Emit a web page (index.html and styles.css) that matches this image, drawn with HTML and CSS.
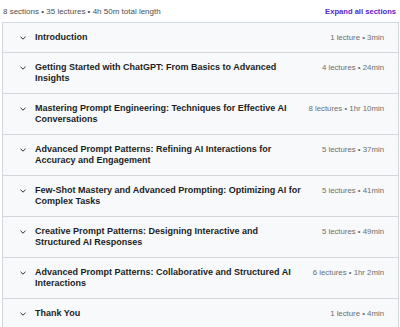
FILE: index.html
```html
<!DOCTYPE html>
<html lang="en">
<head>
  <meta charset="UTF-8" />
  <title>Course content</title>
  <link rel="stylesheet" href="styles.css">
</head>
<body>
  <div class="curriculum">
    <div class="summary">
      <span class="summary-text">8 sections • 35 lectures • 4h 50m total length</span>
      <button class="expand-all">Expand all sections</button>
    </div>

    <div class="sections">
      <div class="section">
        <svg class="chevron" viewBox="0 0 8 8"><path d="M1.5 2.8 L4 5.2 L6.5 2.8" /></svg>
        <span class="title">Introduction</span>
        <span class="meta">1 lecture • 3min</span>
      </div>
      <div class="section">
        <svg class="chevron" viewBox="0 0 8 8"><path d="M1.5 2.8 L4 5.2 L6.5 2.8" /></svg>
        <span class="title">Getting Started with ChatGPT: From Basics to Advanced Insights</span>
        <span class="meta">4 lectures • 24min</span>
      </div>
      <div class="section">
        <svg class="chevron" viewBox="0 0 8 8"><path d="M1.5 2.8 L4 5.2 L6.5 2.8" /></svg>
        <span class="title">Mastering Prompt Engineering: Techniques for Effective AI Conversations</span>
        <span class="meta">8 lectures • 1hr 10min</span>
      </div>
      <div class="section">
        <svg class="chevron" viewBox="0 0 8 8"><path d="M1.5 2.8 L4 5.2 L6.5 2.8" /></svg>
        <span class="title">Advanced Prompt Patterns: Refining AI Interactions for Accuracy and Engagement</span>
        <span class="meta">5 lectures • 37min</span>
      </div>
      <div class="section">
        <svg class="chevron" viewBox="0 0 8 8"><path d="M1.5 2.8 L4 5.2 L6.5 2.8" /></svg>
        <span class="title">Few-Shot Mastery and Advanced Prompting: Optimizing AI for Complex Tasks</span>
        <span class="meta">5 lectures • 41min</span>
      </div>
      <div class="section">
        <svg class="chevron" viewBox="0 0 8 8"><path d="M1.5 2.8 L4 5.2 L6.5 2.8" /></svg>
        <span class="title">Creative Prompt Patterns: Designing Interactive and Structured AI Responses</span>
        <span class="meta">5 lectures • 49min</span>
      </div>
      <div class="section">
        <svg class="chevron" viewBox="0 0 8 8"><path d="M1.5 2.8 L4 5.2 L6.5 2.8" /></svg>
        <span class="title">Advanced Prompt Patterns: Collaborative and Structured AI Interactions</span>
        <span class="meta">6 lectures • 1hr 2min</span>
      </div>
      <div class="section">
        <svg class="chevron" viewBox="0 0 8 8"><path d="M1.5 2.8 L4 5.2 L6.5 2.8" /></svg>
        <span class="title">Thank You</span>
        <span class="meta">1 lecture • 4min</span>
      </div>
    </div>
  </div>
</body>
</html>
```

FILE: styles.css
```css
body {
  margin: 0;
  font-family: 'Liberation Sans', Arial, sans-serif;
  color: #2d2f31;
  background: #fff;
}

.curriculum {
  padding: 0 1px 0 2px;
}

/* ligne du haut */
.summary {
  display: flex;
  justify-content: space-between;
  align-items: center;
  height: 22px;
  padding: 0 3px 0 1px;
}
.summary-text {
  font-size: 8px;
  color: #4b4f52;
}
.expand-all {
  border: none;
  background: none;
  padding: 0;
  font-family: inherit;
  font-size: 7.6px;
  font-weight: 700;
  color: #5624d0;
  cursor: pointer;
}

.sections {
  border: 1px solid #d1d7dc;
  border-bottom: none;
}

.section {
  display: flex;
  align-items: flex-start;
  background: #f7f9fa;
  border-bottom: 1px solid #d1d7dc;
  padding: 9px 14px 9px 16px;
  line-height: 11px;
}

.chevron {
  width: 8px;
  height: 8px;
  margin: 1.5px 8px 0 0;
  flex: none;
  fill: none;
  stroke: #2d2f31;
  stroke-width: 1;
}

.title {
  flex: 1;
  font-size: 9px;
  font-weight: 700;
  color: #1c1d1f;
}

.meta {
  margin-left: 18px;
  font-size: 7.8px;
  color: #6a6f73;
  white-space: nowrap;
}
```
